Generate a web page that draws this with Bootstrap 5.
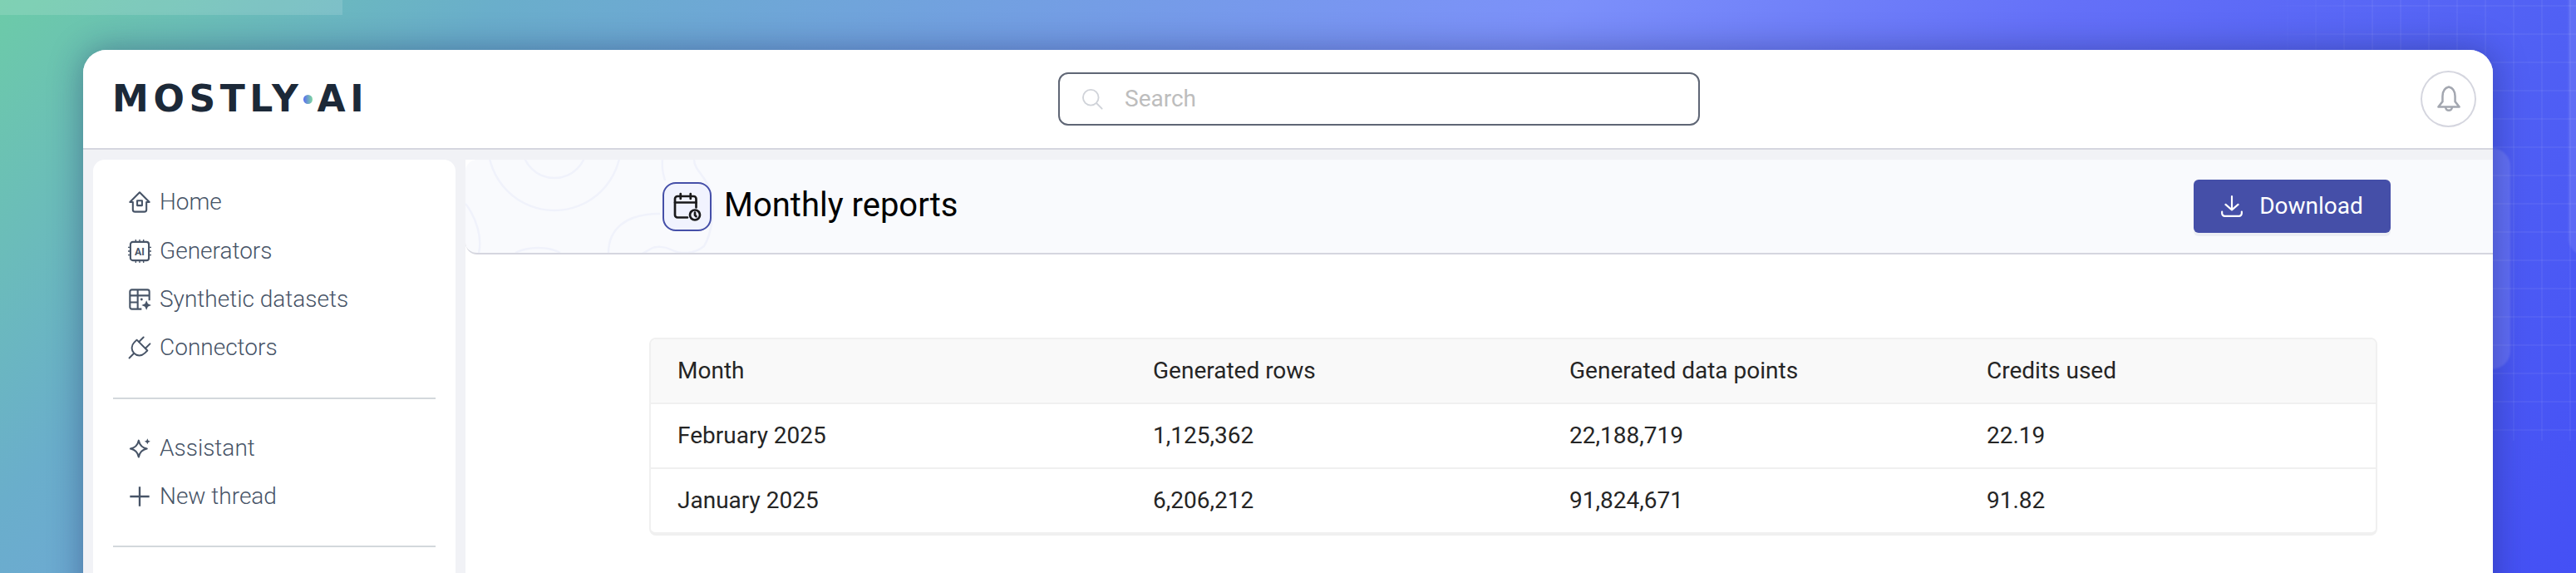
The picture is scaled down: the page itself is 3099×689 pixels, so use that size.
<!DOCTYPE html>
<html lang="en">
<head>
<meta charset="UTF-8">
<title>Monthly reports</title>
<link rel="stylesheet" href="https://cdn.jsdelivr.net/npm/bootstrap@5.3.0/dist/css/bootstrap.min.css">
<style>
html, body { height: 100%; }
body {
    font-family: Roboto, "Liberation Sans", sans-serif;
    overflow: hidden;
    padding: 60px 100px 0;
    background: linear-gradient(135deg, #6ccba8 0%, #6aaecb 16%, #7c90fa 50%, #6470f8 66%, #5060f4 82%, #4450f5 100%);
    position: relative;
}
.top-strip { position: absolute; left: 0; top: 0; width: 412px; height: 18px; background: rgba(255,255,255,.13); }
.grid-lines {
    position: absolute; left: 2699px; top: 0; width: 400px; height: 530px;
    background-image: linear-gradient(rgba(255,255,255,.05) 2px, transparent 2px), linear-gradient(90deg, rgba(255,255,255,.05) 2px, transparent 2px);
    background-size: 34px 34px;
    background-position: 18px 6px;
    -webkit-mask-image: radial-gradient(ellipse 400px 540px at 100% 30%, #000 65%, transparent 100%);
    mask-image: radial-gradient(ellipse 400px 540px at 100% 30%, #000 65%, transparent 100%);
}
.side-glass { position: absolute; left: 2975px; top: 178px; width: 45px; height: 266px; border-radius: 0 22px 22px 0; background: rgba(255,255,255,.12); filter: blur(1px); }
.far-glass { position: absolute; left: 3090px; top: -20px; width: 40px; height: 327px; border-radius: 20px; background: rgba(255,255,255,.1); filter: blur(1px); }
.app-window {
    position: relative; width: 2899px; height: 700px;
    background: #f1f2f6; border-radius: 28px 28px 0 0;
    box-shadow: 0 0 40px rgba(20,30,90,.4);
    overflow: hidden;
}
.top-bar { height: 120px; background: #fff; border-bottom: 2px solid #d5d6df; padding: 0 20px 0 35px; }
.brand { width: 303px; font-family: "DejaVu Sans", sans-serif; font-weight: 700; font-size: 44px; line-height: 1; letter-spacing: 5.6px; color: #1c2938; white-space: nowrap; }
.brand-dot { display: inline-block; width: 11px; height: 11px; border-radius: 50%; margin: 0 6px 9px 0; background: linear-gradient(90deg, #5a6cf0, #7fd9a0); }
.search-box { left: 1173px; top: 27px; width: 772px; height: 64px; border: 2px solid #5f6675; border-radius: 12px; padding-left: 25px; gap: 25px; background: #fff; }
.search-text { font-size: 28px; color: #bdbdbd; font-weight: 400; }
.bell-btn { width: 67px; height: 68px; border: 2px solid #d5d6df; border-radius: 50%; background: #fff; }
.body-row { gap: 12px; padding: 12px 0 0 12px; }
.side-nav { width: 436px; flex: none; height: 700px; background: #fff; border-radius: 14px 14px 0 0; padding: 22px 24px 0; }
.nav-item-row { height: 58.4px; padding-left: 18px; gap: 10px; font-size: 28px; font-weight: 300; color: #475467; }
.nav-item-row svg { width: 28px; height: 28px; flex: none; }
.side-sep { height: 2px; background: #d3d8dc; margin: 30px 0; }
.main-pane { flex: 1; min-width: 0; background: #fff; }
.page-head { height: 114px; background: #f9fafd; border-bottom: 2px solid #d5d6df; border-radius: 14px 0 0 14px; padding: 0 123px 0 237px; position: relative; overflow: hidden; }
.head-swirl { position: absolute; left: 0; top: 0; width: 500px; height: 114px; }
.head-icon { position: relative; width: 59px; height: 59px; border: 2px solid #454fa8; border-radius: 16px; background: #f1f3fe; margin-right: 15px; }
.head-title { position: relative; top: -1px; font-size: 40px; font-weight: 400; color: #000; margin: 0; }
.dl-btn { position: relative; width: 237px; height: 64px; background: #454fa8; border: 0; border-radius: 6px; color: #fff; font-size: 28px; gap: 20px; box-shadow: 0 4px 0 #eceef4; }
.report-wrap { padding: 100px 0 0 221px; }
.report-table { width: 2079px; border: 2px solid #f0f0f0; border-bottom-width: 4px; border-radius: 8px; overflow: hidden; font-size: 28px; }
.report-head { background: #f9f9f9; color: #000; }
.report-line { height: 78px; border-bottom: 2px solid #f0f0f0; color: #252525; font-weight: 400; }
.report-line:last-child { border-bottom: 0; height: 76px; }
.col-month { width: 604px; padding-left: 32px; }
.col-rows { width: 501px; }
.col-points { width: 502px; }
</style>
</head>
<body>
<div class="top-strip"></div>
<div class="grid-lines"></div>
<div class="side-glass"></div>
<div class="far-glass"></div>

<div class="app-window">
    <!-- Top bar -->
    <header class="top-bar d-flex align-items-center justify-content-between">
        <div class="brand">MOSTLY<span class="brand-dot"></span>AI</div>
        <div class="search-box position-absolute d-flex align-items-center">
            <svg width="28" height="28" viewBox="0 0 24 24" fill="none" stroke="#d0d3d9" stroke-width="1.6" stroke-linecap="round"><circle cx="10.5" cy="10.5" r="8"/><path d="M16.500 16.500l5.500 5.500"/></svg>
            <span class="search-text">Search</span>
        </div>
        <div class="bell-btn d-flex align-items-center justify-content-center">
            <svg width="32" height="34" viewBox="0 0 24 27" fill="none" stroke="#a3a7b0" stroke-width="2" stroke-linejoin="round"><path d="M12 2c-4 1-6 4-6 9v5l-4 5h20l-4-5v-5c0-5-2-8-6-9z"/><path d="M9 21.500a3 3 0 0 0 6 0"/></svg>
        </div>
    </header>

    <div class="body-row d-flex">
        <!-- Sidebar -->
        <nav class="side-nav">
            <div class="nav-item-row d-flex align-items-center">
                <svg viewBox="0 0 24 24" fill="none" stroke="#475467" stroke-width="1.8" stroke-linejoin="round"><path d="M12 2L2 12h3v8a2 2 0 0 0 2 2h10a2 2 0 0 0 2-2v-8h3z"/><rect x="9.500" y="10.500" width="5" height="5"/></svg>
                <span>Home</span>
            </div>
            <div class="nav-item-row d-flex align-items-center">
                <svg viewBox="0 0 24 24" fill="none" stroke="#475467" stroke-width="1.8"><rect x="2.500" y="2.500" width="19" height="19" rx="2.500"/><path d="M8 0v2M12 0v2M16 0v2M8 22v2M12 22v2M16 22v2M0 8h2M0 12h2M0 16h2M22 8h2M22 12h2M22 16h2" stroke-width="1.200"/><text x="12" y="16" text-anchor="middle" font-family="Roboto, sans-serif" font-size="10.500" font-weight="700" fill="#475467" stroke="none">AI</text></svg>
                <span>Generators</span>
            </div>
            <div class="nav-item-row d-flex align-items-center">
                <svg viewBox="0 0 24 24" fill="none" stroke="#475467" stroke-width="1.8" stroke-linejoin="round"><path d="M14 22H4a2 2 0 0 1-2-2V4a2 2 0 0 1 2-2h16a2 2 0 0 1 2 2v9"/><path d="M2 8h20M10 2v20M2 15h8"/><path d="M19 13l1.500 3.500L24 18l-3.500 1.500L19 23l-1.500-3.500L14 18l3.500-1.500z" fill="#475467" stroke="none"/><circle cx="14" cy="12" r="1.200" fill="#475467" stroke="none"/></svg>
                <span>Synthetic datasets</span>
            </div>
            <div class="nav-item-row d-flex align-items-center">
                <svg viewBox="3 3 18 18" fill="none" stroke="#475467" stroke-width="1.250" stroke-linecap="round" stroke-linejoin="round"><path d="M9.785 6l8.215 8.215l-2.054 2.054a5.810 5.810 0 1 1-8.215-8.215z"/><path d="M4 20l3.500-3.500M15 4l-3.500 3.500M20 9l-3.500 3.500"/></svg>
                <span>Connectors</span>
            </div>
            <div class="side-sep"></div>
            <div class="nav-item-row d-flex align-items-center">
                <svg viewBox="0 0 24 24" fill="none" stroke="#475467" stroke-width="1.8" stroke-linejoin="round"><path d="M11 4c1 5 3.500 7.500 8.500 8.500-5 1-7.500 3.500-8.500 8.500-1-5-3.500-7.500-8.500-8.500 5-1 7.500-3.500 8.500-8.500z"/><path d="M20 2l.9 2.100L23 5l-2.100.9L20 8l-.9-2.100L17 5l2.100-.9z" fill="#475467" stroke="none"/></svg>
                <span>Assistant</span>
            </div>
            <div class="nav-item-row d-flex align-items-center">
                <svg viewBox="0 0 24 24" fill="none" stroke="#475467" stroke-width="2"><path d="M12 2v20M2 12h20"/></svg>
                <span>New thread</span>
            </div>
            <div class="side-sep"></div>
        </nav>

        <!-- Main -->
        <main class="main-pane">
            <div class="page-head d-flex align-items-center">
                <svg class="head-swirl" viewBox="0 0 500 114" fill="none" stroke="#f0f2fb" stroke-width="2.500">
                    <circle cx="107" cy="-19" r="80"/><circle cx="107" cy="-17" r="39"/>
                    <path d="M0 53c14 18 20 42 16 59"/>
                    <path d="M275 0c0 12 14 20 20 38 5 18 2 50-8 66-12 10-28 10-40 4-8-4-18-4-24-1-5 3-9 6-13 7"/>
                    <path d="M172 112c0-28 20-47 62-47"/>
                    <path d="M237 0c-1 8 0 15 3 25"/>
                    <path d="M60 112c15-8 40-8 54 0"/>
                </svg>
                <div class="head-icon d-flex align-items-center justify-content-center">
                    <svg width="36" height="36" viewBox="0 0 24 24" fill="none" stroke="#1a1a1a" stroke-width="1.800" stroke-linecap="round" stroke-linejoin="round"><path d="M12 21H4a2 2 0 0 1-2-2V6a2 2 0 0 1 2-2h13a2 2 0 0 1 2 2v7"/><path d="M2 9h17M6.500 2v4M14.500 2v4"/><circle cx="18" cy="19" r="4"/><path d="M18 17v2.200l1 1"/></svg>
                </div>
                <h1 class="head-title">Monthly reports</h1>
                <button class="dl-btn ms-auto d-flex align-items-center justify-content-center" type="button">
                    <svg width="26" height="28" viewBox="0 0 24 26" fill="none" stroke="#fff" stroke-width="2" stroke-linecap="round" stroke-linejoin="round"><path d="M12 2v15M5 11l7 6 7-6M1 19v2a3 3 0 0 0 3 3h16a3 3 0 0 0 3-3v-2"/></svg>
                    <span>Download</span>
                </button>
            </div>
            <div class="report-wrap">
                <div class="report-table">
                    <div class="report-line report-head d-flex align-items-center">
                        <div class="col-month">Month</div><div class="col-rows">Generated rows</div><div class="col-points">Generated data points</div><div>Credits used</div>
                    </div>
                    <div class="report-line d-flex align-items-center">
                        <div class="col-month">February 2025</div><div class="col-rows">1,125,362</div><div class="col-points">22,188,719</div><div>22.19</div>
                    </div>
                    <div class="report-line d-flex align-items-center">
                        <div class="col-month">January 2025</div><div class="col-rows">6,206,212</div><div class="col-points">91,824,671</div><div>91.82</div>
                    </div>
                </div>
            </div>
        </main>
    </div>
</div>
<script src="https://cdn.jsdelivr.net/npm/bootstrap@5.3.0/dist/js/bootstrap.bundle.min.js"></script>
</body>
</html>
